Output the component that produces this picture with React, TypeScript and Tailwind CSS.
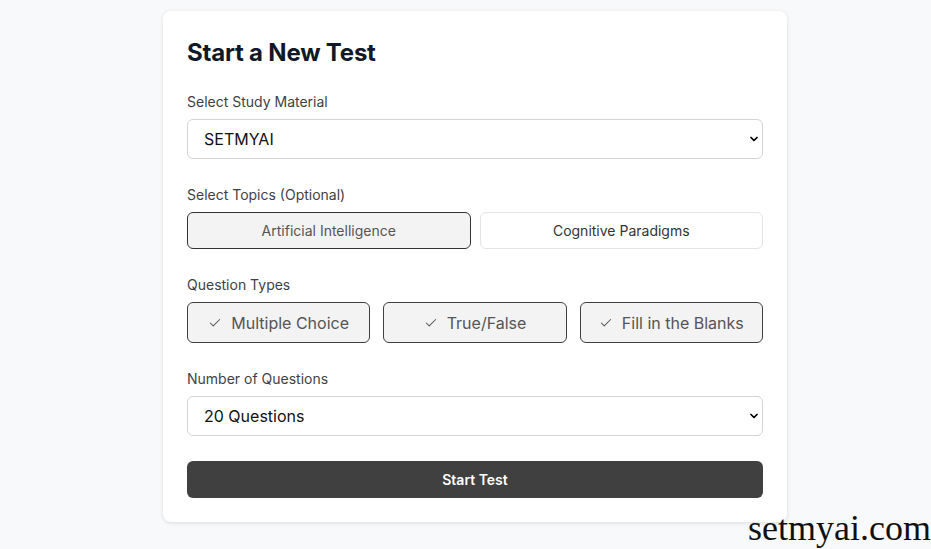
import React from "react";
import { Check, ChevronDown } from "lucide-react";

const font = { fontFamily: "Inter, 'Noto Sans', sans-serif" };

function Select({ value }: { value: string }) {
  return (
    <div className="relative h-10 w-full">
      <select
        defaultValue={value}
        className="h-10 w-full appearance-none rounded-md border border-[#d4d4d8] bg-white pl-4 pr-10 text-[16px] text-[#111111] outline-none"
        style={font}
      >
        <option>{value}</option>
      </select>
      <ChevronDown className="pointer-events-none absolute right-[3px] top-[14px] h-[12px] w-[12px] text-black" strokeWidth={3.5} />
    </div>
  );
}

function Label({ children }: { children: React.ReactNode }) {
  return <div className="mb-[7px] h-[21px] pt-[1px] text-[14px] leading-5 text-[#3f3f46]">{children}</div>;
}

export default function App() {
  return (
    <div className="relative h-[549px] w-[931px] overflow-hidden bg-[#f8f9fb]" style={font}>
      <div className="pl-[163px] pt-[11px]">
        <div className="w-[624px] rounded-lg bg-white p-6 shadow-[0_1px_4px_rgba(0,0,0,0.12)]">
          <div className="mb-[21px] h-[35px] pt-[1px] text-[24px] font-bold leading-[34px] tracking-[-0.2px] text-[#111827]">
            Start a New Test
          </div>

          <Label>Select Study Material</Label>
          <Select value="SETMYAI" />

          <div className="mt-[25px]">
            <Label>Select Topics (Optional)</Label>
            <div className="flex gap-[9px]">
              <button className="h-[37px] flex-1 rounded-md border border-[#333333] bg-[#f3f3f3] text-[14px] text-[#555555]">
                Artificial Intelligence
              </button>
              <button className="h-[37px] flex-1 rounded-md border border-[#e4e4e7] bg-white text-[14px] text-[#333333]">
                Cognitive Paradigms
              </button>
            </div>
          </div>

          <div className="mt-[25px]">
            <Label>Question Types</Label>
            <div className="flex gap-[13px]">
              {["Multiple Choice", "True/False", "Fill in the Blanks"].map((t) => (
                <button
                  key={t}
                  className="flex h-[41px] flex-1 items-center justify-center gap-[9px] rounded-md border border-[#3f3f3f] bg-[#f3f3f4] text-[16px] text-[#555555]"
                >
                  <Check className="h-[14px] w-[14px]" strokeWidth={1.75} />
                  {t}
                </button>
              ))}
            </div>
          </div>

          <div className="mt-[25px]">
            <Label>Number of Questions</Label>
            <Select value="20 Questions" />
          </div>

          <button className="mt-[25px] h-[37px] w-full rounded-md bg-[#404040] text-[14px] font-semibold text-white">
            Start Test
          </button>
        </div>
      </div>
      <div
        className="absolute bottom-[3px] right-0 text-[36px] leading-none text-[#111111]"
        style={{ fontFamily: "'Liberation Serif', serif" }}
      >
        setmyai.com
      </div>
    </div>
  );
}
